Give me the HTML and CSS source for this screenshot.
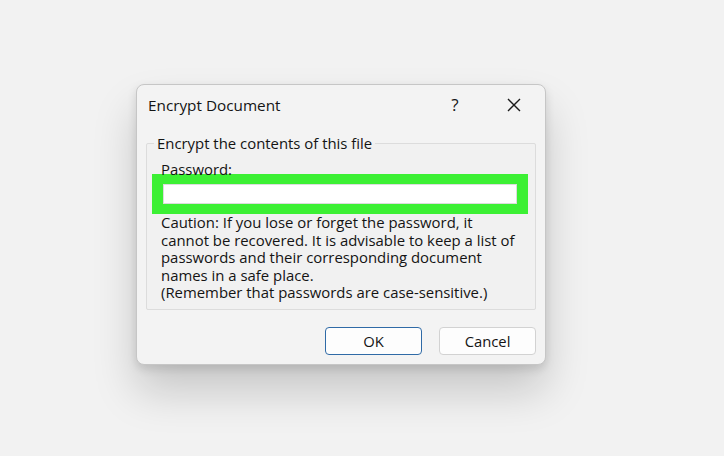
FILE: index.html
```html
<!DOCTYPE html>
<html>
<head>
<meta charset="utf-8">
<link rel="stylesheet" href="styles.css">
</head>
<body>
<div class="dialog">
  <div class="titlebar">
    <span class="title">Encrypt Document</span>
    <span class="help">?</span>
    <span class="close">
      <svg width="14" height="14" viewBox="0 0 14 14"><path d="M1 1 L13 13 M13 1 L1 13" stroke="#1b1b1b" stroke-width="1.4" fill="none"/></svg>
    </span>
  </div>
  <fieldset class="group">
    <legend>Encrypt the contents of this file</legend>
    <div class="label">Password:</div>
    <div class="highlight"><div class="input"></div></div>
    <p class="caution">Caution: If you lose or forget the password, it<br>cannot be recovered. It is advisable to keep a list of<br>passwords and their corresponding document<br>names in a safe place.<br>(Remember that passwords are case-sensitive.)</p>
  </fieldset>
  <div class="buttons">
    <button class="btn btn-default">OK</button>
    <button class="btn">Cancel</button>
  </div>
</div>
</body>
</html>
```
FILE: styles.css
```css
html, body {
  margin: 0;
  padding: 0;
}
body {
  background: #f2f2f2;
  width: 724px;
  height: 456px;
  overflow: hidden;
  font-family: "Open Sans", "Noto Sans", sans-serif;
  font-weight: 500;
  color: #141414;
  padding-top: 84px;
  padding-left: 136px;
  box-sizing: border-box;
}
.dialog {
  width: 410px;
  box-sizing: border-box;
  background: #f3f3f3;
  border: 1px solid #c6c6c6;
  border-radius: 8px;
  box-shadow: 0 26px 44px rgba(0,0,0,0.18), 0 4px 10px rgba(0,0,0,0.12);
  padding: 0 9px 9px 9px;
}
.titlebar {
  height: 39px;
  display: flex;
  align-items: center;
  padding-left: 2px;
}
.title {
  font-size: 15.3px;
  flex: 1;
}
.help {
  font-size: 17px;
  width: 20px;
  text-align: center;
  margin-right: 42px;
}
.close {
  display: flex;
  width: 14px;
  height: 14px;
  margin-right: 15px;
}
.group {
  margin: 10px 0 0 0;
  padding: 0 0 7px 0;
  border: 1px solid #dcdcdc;
  border-radius: 2px;
  background: #f1f1f1;
  min-width: 0;
}
.group legend {
  font-size: 14.9px;
  line-height: 18px;
  padding: 0 3px;
  margin-left: 7px;
}
.label {
  font-size: 14.9px;
  line-height: 16px;
  margin: 9px 0 0 14px;
}
.highlight {
  margin: -3px 0 0 5px;
  width: 376px;
  height: 40px;
  box-sizing: border-box;
  background: #3cf034;
  padding: 10px 11px;
}
.input {
  background: #ffffff;
  height: 20px;
  border: 1px solid #dcdcdc;
  box-sizing: border-box;
}
.caution {
  margin: 0 0 0 14px;
  font-size: 14.9px;
  line-height: 17.5px;
}
.buttons {
  display: flex;
  justify-content: flex-end;
  gap: 17px;
  margin-top: 17px;
}
.btn {
  width: 97px;
  height: 28px;
  box-sizing: border-box;
  background: #fdfdfd;
  border: 1px solid #d2d2d2;
  border-radius: 4px;
  font-family: "Open Sans", "Noto Sans", sans-serif;
  font-weight: 500;
  font-size: 14.8px;
  color: #141414;
  padding: 0;
}
.btn-default {
  border: 1.5px solid #2f6aa6;
}
```
